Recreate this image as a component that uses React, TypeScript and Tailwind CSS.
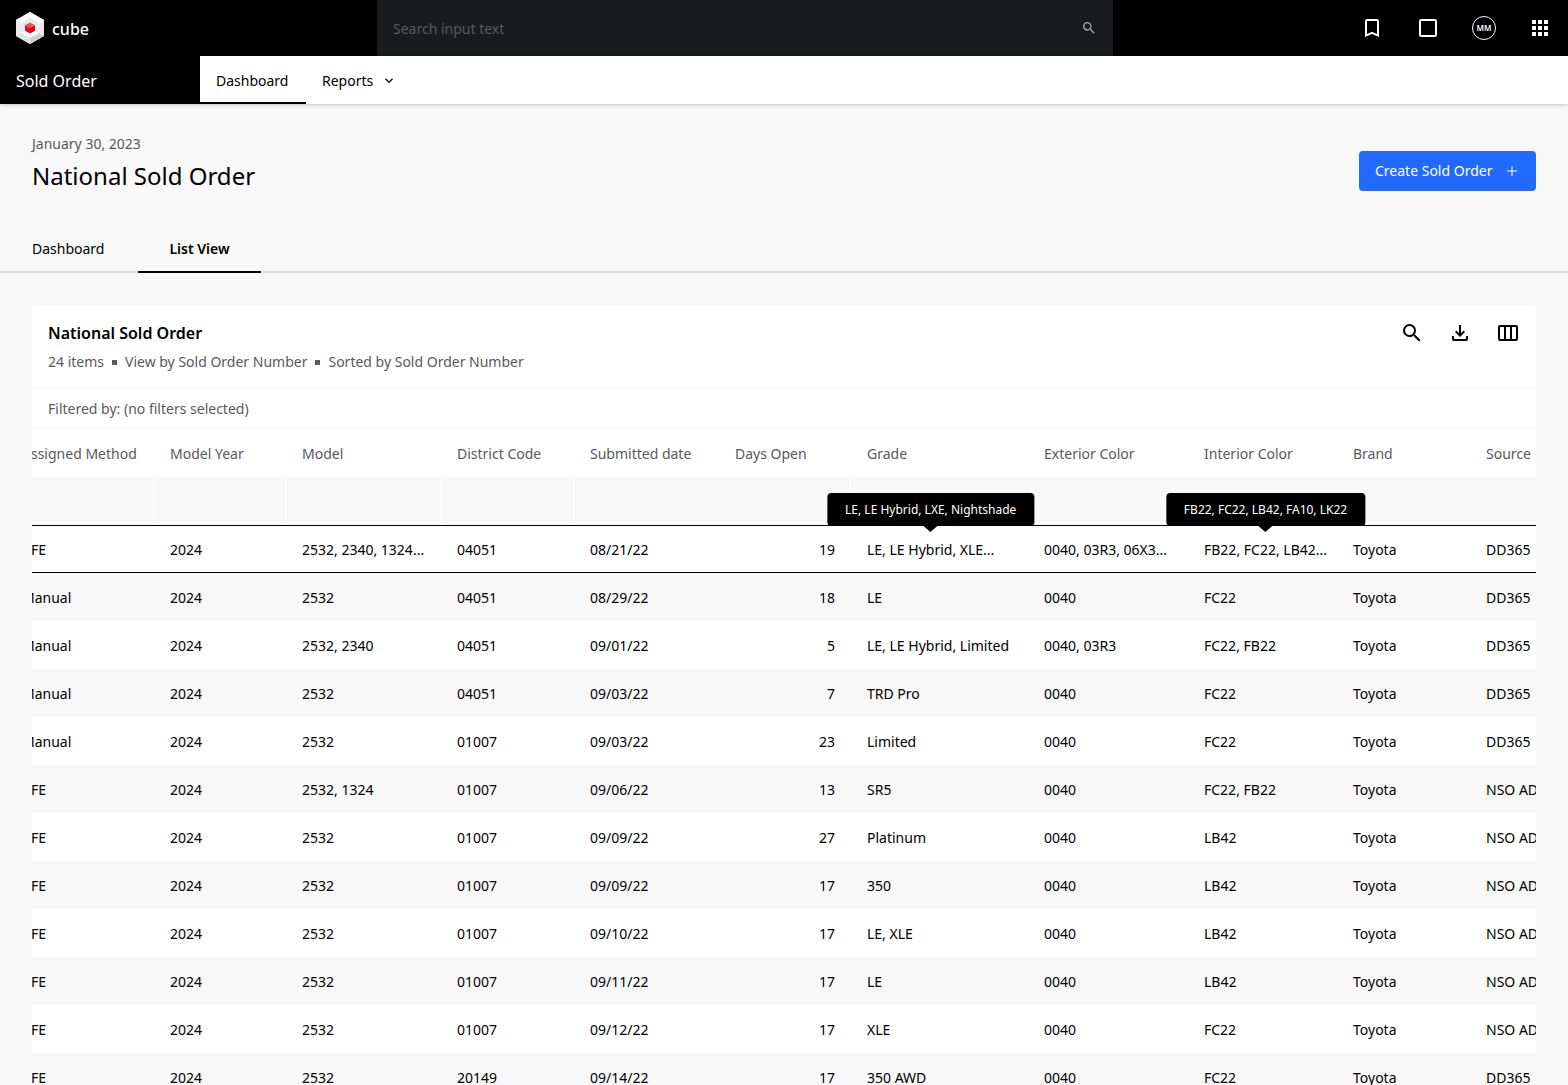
import { useLayoutEffect, useRef } from "react";
import { MdApps, MdBookmarkBorder, MdSearch } from "react-icons/md";

type Order = {
  method: string;
  year: string;
  model: string;
  district: string;
  submitted: string;
  daysOpen: number;
  grade: string;
  exterior: string;
  interior: string;
  brand: string;
  source: string;
  selected?: boolean;
  gradeTip?: string;
  interiorTip?: string;
};

const COLUMNS = [
  { label: "Assigned Method", width: "w-[148px]", divider: true },
  { label: "Model Year", width: "w-[132px]", divider: true },
  { label: "Model", width: "w-[155px]", divider: true },
  { label: "District Code", width: "w-[133px]", divider: true },
  { label: "Submitted date", width: "w-[145px]", divider: false },
  { label: "Days Open", width: "w-[132px]", divider: true },
  { label: "Grade", width: "w-[177px]", divider: false },
  { label: "Exterior Color", width: "w-[160px]", divider: false },
  { label: "Interior Color", width: "w-[149px]", divider: false },
  { label: "Brand", width: "w-[133px]", divider: false },
  { label: "Source", width: "w-[133px]", divider: false },
];

function order(
  method: string,
  model: string,
  district: string,
  submitted: string,
  daysOpen: number,
  grade: string,
  exterior: string,
  interior: string,
  source: string,
): Order {
  return { method, year: "2024", model, district, submitted, daysOpen, grade, exterior, interior, brand: "Toyota", source };
}

const ORDERS: Order[] = [
  {
    ...order("AFE", "2532, 2340, 1324...", "04051", "08/21/22", 19, "LE, LE Hybrid, XLE...", "0040, 03R3, 06X3...", "FB22, FC22, LB42...", "DD365"),
    selected: true,
    gradeTip: "LE, LE Hybrid, LXE, Nightshade",
    interiorTip: "FB22, FC22, LB42, FA10, LK22",
  },
  order("Manual", "2532", "04051", "08/29/22", 18, "LE", "0040", "FC22", "DD365"),
  order("Manual", "2532, 2340", "04051", "09/01/22", 5, "LE, LE Hybrid, Limited", "0040, 03R3", "FC22, FB22", "DD365"),
  order("Manual", "2532", "04051", "09/03/22", 7, "TRD Pro", "0040", "FC22", "DD365"),
  order("Manual", "2532", "01007", "09/03/22", 23, "Limited", "0040", "FC22", "DD365"),
  order("AFE", "2532, 1324", "01007", "09/06/22", 13, "SR5", "0040", "FC22, FB22", "NSO ADMIN"),
  order("AFE", "2532", "01007", "09/09/22", 27, "Platinum", "0040", "LB42", "NSO ADMIN"),
  order("AFE", "2532", "01007", "09/09/22", 17, "350", "0040", "LB42", "NSO ADMIN"),
  order("AFE", "2532", "01007", "09/10/22", 17, "LE, XLE", "0040", "LB42", "NSO ADMIN"),
  order("AFE", "2532", "01007", "09/11/22", 17, "LE", "0040", "LB42", "NSO ADMIN"),
  order("AFE", "2532", "01007", "09/12/22", 17, "XLE", "0040", "FC22", "NSO ADMIN"),
  order("AFE", "2532", "20149", "09/14/22", 17, "350 AWD", "0040", "FC22", "DD365"),
];

function CubeLogo() {
  return (
    <svg width="28" height="32" viewBox="0 0 28 32" aria-hidden="true">
      <path d="M14 0 28 8v16l-14 8L0 24V8z" fill="#e9eaeb" />
      <path d="M14 0 28 8l-5 3-9-5-9 5-5-3z" fill="#fff" />
      <path d="M5 11l9-5 9 5v10l-9 5-9-5z" fill="#e9eaeb" />
      <path d="M5 21l9-5 9 5-9 5z" fill="#fff" />
      <path d="M0 24l5-3 9 5v6z" fill="#e2e2e4" />
      <path d="M28 24l-5-3-9 5v6z" fill="#d2d2d5" />
      <path d="M14 10.500l5 2.700-5 2.800-5-2.800z" fill="#ff4b55" />
      <path d="M9 13.200l5 2.800v5.500l-5-2.800z" fill="#eb0a1e" />
      <path d="M19 13.200l-5 2.800v5.500l5-2.800z" fill="#d8001c" />
    </svg>
  );
}

function SquareIcon() {
  return (
    <svg width="24" height="24" viewBox="0 0 24 24" fill="none" stroke="currentColor" strokeWidth="2" aria-hidden="true">
      <rect x="4" y="4" width="16" height="16" rx="1" />
    </svg>
  );
}

function ChevronIcon() {
  return (
    <svg width="16" height="16" viewBox="0 0 24 24" fill="currentColor" aria-hidden="true">
      <path d="M12 15.400l-6-6L7.400 8l4.600 4.600L16.600 8 18 9.400z" />
    </svg>
  );
}

function DownloadIcon() {
  return (
    <svg width="24" height="24" viewBox="0 0 24 24" fill="currentColor" aria-hidden="true">
      <path d="M12 16l-5-5 1.400-1.450 2.600 2.600V4h2v8.150l2.600-2.600L17 11zM6 20q-.825 0-1.412-.587T4 18v-3h2v3h12v-3h2v3q0 .825-.587 1.413T18 20z" />
    </svg>
  );
}

function ColumnsIcon() {
  return (
    <svg width="24" height="24" viewBox="0 0 24 24" fill="none" stroke="currentColor" strokeWidth="2" aria-hidden="true">
      <rect x="3" y="5" width="18" height="14" rx="1" />
      <path d="M9 5v14M15 5v14" />
    </svg>
  );
}

function WithTooltip({ text, tip }: { text: string; tip?: string }) {
  if (!tip) return <>{text}</>;
  return (
    <span className="relative inline-block">
      {text}
      <span
        role="tooltip"
        className="absolute bottom-full left-1/2 z-10 mb-3 -translate-x-1/2 rounded bg-black px-[18px] pt-[9px] pb-2 text-xs text-white"
      >
        {tip}
        <svg width="14" height="6" viewBox="0 0 14 6" className="absolute top-full left-1/2 -translate-x-1/2" aria-hidden="true">
          <path d="M0 0h14L7 6z" fill="#000" />
        </svg>
      </span>
    </span>
  );
}

function TopBar() {
  return (
    <header className="flex h-14 shrink-0 bg-black text-white">
      <div className="flex w-[377px] shrink-0 items-center gap-2 px-4">
        <CubeLogo />
        <span className="pt-0.5 text-base font-medium">cube</span>
      </div>
      <form className="flex flex-1 items-center bg-[#1a1b1d] px-4" onSubmit={(e) => e.preventDefault()}>
        <input
          type="text"
          aria-label="Search"
          placeholder="Search input text"
          className="min-w-0 flex-1 bg-transparent pt-0.5 text-sm outline-none placeholder:text-[#58595b]"
        />
        <button type="submit" aria-label="Search" className="text-[#a5a6a8]">
          <MdSearch size={16} />
        </button>
      </form>
      <nav className="flex w-[455px] shrink-0 items-center justify-end gap-8 px-4">
        <button aria-label="Bookmarks">
          <MdBookmarkBorder size={24} />
        </button>
        <button aria-label="Window">
          <SquareIcon />
        </button>
        <button className="flex size-6 items-center justify-center rounded-full border border-white text-[8px] font-semibold">
          MM
        </button>
        <button aria-label="Apps">
          <MdApps size={24} />
        </button>
      </nav>
    </header>
  );
}

export default function App() {
  const scroller = useRef<HTMLDivElement>(null);

  // open the table slightly scrolled
  useLayoutEffect(() => {
    if (scroller.current) scroller.current.scrollLeft = 26;
  }, []);

  return (
    <div className="flex h-screen flex-col overflow-hidden bg-[#f8f8f8] font-['Noto_Sans',sans-serif] text-sm leading-6 text-black">
      <TopBar />
      <nav className="z-10 flex h-12 shrink-0 bg-white shadow-[0_1px_4px_rgba(0,0,0,0.2)]">
        <div className="flex w-[200px] items-center bg-black px-4 pt-0.5 text-base text-white">Sold Order</div>
        <a href="#dashboard" className="flex w-[106px] items-center border-b-2 border-black px-4 pt-1">
          Dashboard
        </a>
        <button className="flex items-center gap-2 px-4 pt-0.5">
          Reports
          <ChevronIcon />
        </button>
      </nav>

      <main className="flex-1 overflow-y-auto [scrollbar-width:none]">
        <div className="flex items-center justify-between px-8 pt-7">
          <div>
            <p className="text-[#58595b]">January 30, 2023</p>
            <h1 className="mt-1 text-2xl leading-8">National Sold Order</h1>
          </div>
          <button className="mt-[18px] flex h-10 w-[177px] items-center justify-between rounded bg-[#226aff] px-4 text-white">
            Create Sold Order
            <svg width="16" height="16" viewBox="0 0 16 16" stroke="currentColor" aria-hidden="true">
              <path d="M8 3v10M3 8h10" />
            </svg>
          </button>
        </div>

        <div role="tablist" className="mt-8 flex h-[49px] border-b-2 border-[#dcdddd]">
          <button role="tab" aria-selected="false" className="w-[138px] px-8 pt-0.5 text-left">
            Dashboard
          </button>
          <button role="tab" aria-selected="true" className="-mb-0.5 w-[123px] border-b-2 border-black pt-0.5 font-semibold">
            List View
          </button>
        </div>

        <section className="mx-8 mt-8 rounded-t bg-white">
          <div className="flex h-[83px] items-start justify-between border-b border-[#f8f8f8] px-4 pt-4">
            <div>
              <h2 className="text-base font-semibold">National Sold Order</h2>
              <p className="mt-[5px] flex items-center gap-2 text-[#58595b]">
                24 items
                <span className="size-[5px] bg-[#58595b]" />
                View by Sold Order Number
                <span className="size-[5px] bg-[#58595b]" />
                Sorted by Sold Order Number
              </p>
            </div>
            <div className="flex gap-6">
              <button aria-label="Search table">
                <MdSearch size={24} />
              </button>
              <button aria-label="Download">
                <DownloadIcon />
              </button>
              <button aria-label="Columns">
                <ColumnsIcon />
              </button>
            </div>
          </div>
          <div className="border-b border-[#f8f8f8] pt-[9px] pr-4 pb-[7px] pl-4 text-[#58595b]">
            Filtered by: (no filters selected)
          </div>

          <div ref={scroller} className="overflow-x-auto [scrollbar-width:none]">
            <table className="w-[1597px] min-w-full table-fixed border-separate border-spacing-0 text-left whitespace-nowrap">
              <thead>
                <tr>
                  {COLUMNS.map((c) => (
                    <th key={c.label} className={`h-12 px-4 pt-0.5 pb-0 font-normal text-[#58595b] ${c.width}`}>
                      {c.label}
                    </th>
                  ))}
                </tr>
                <tr className="bg-[#f8f8f8]">
                  {COLUMNS.map((c) => (
                    <td key={c.label} className={c.divider ? "h-12 border-r border-white" : "h-12"} />
                  ))}
                </tr>
              </thead>
              <tbody>
                {ORDERS.map((o, i) => (
                  <tr
                    key={i}
                    className={`odd:bg-white even:bg-[#f8f8f8] [&>td]:h-12 [&>td]:px-4 [&>td]:pt-0.5 [&>td]:pb-0 ${
                      o.selected ? "[&>td]:border-y [&>td]:border-black" : ""
                    }`}
                  >
                    <td>{o.method}</td>
                    <td>{o.year}</td>
                    <td>{o.model}</td>
                    <td>{o.district}</td>
                    <td>{o.submitted}</td>
                    <td className="text-right">{o.daysOpen}</td>
                    <td>
                      <WithTooltip text={o.grade} tip={o.gradeTip} />
                    </td>
                    <td>{o.exterior}</td>
                    <td>
                      <WithTooltip text={o.interior} tip={o.interiorTip} />
                    </td>
                    <td>{o.brand}</td>
                    <td>{o.source}</td>
                  </tr>
                ))}
              </tbody>
            </table>
          </div>
        </section>
      </main>
    </div>
  );
}
